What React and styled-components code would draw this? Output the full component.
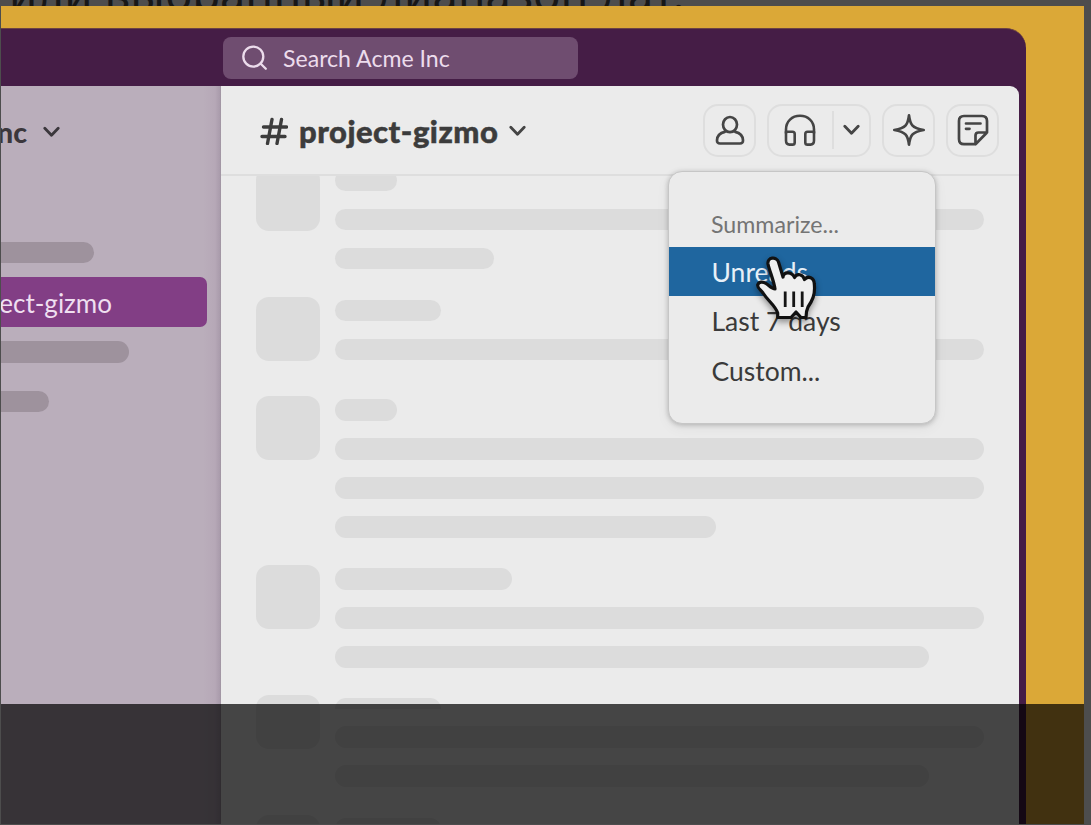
import React from "react"
import styled, { createGlobalStyle } from "styled-components"

const GlobalStyle = createGlobalStyle`
	* {
		box-sizing: border-box;
	}
	body {
		margin: 0;
		overflow: hidden;
		background: #4d4d4d;
		font-family: Lato, sans-serif;
	}
`
const Page = styled.div`
	display: flex;
	flex-direction: column;
	width: 1091px;
	height: 825px;
	overflow: hidden;
`
const Caption = styled.div`
	flex: 0 0 6px;
	display: flex;
	align-items: flex-end;
	overflow: hidden;
	padding-left: 9px;
	color: #171717;
	font: 45.7px/44px "Noto Sans", sans-serif;
	white-space: nowrap;
`
const CaptionText = styled.span`
	display: block;
	margin-bottom: -9px;
`
const Stage = styled.div`
	position: relative;
	width: 1083px;
	height: 818px;
	margin-left: 1px;
	padding-top: 22px;
	background: #dba837;
	overflow: hidden;
`
const Window = styled.div`
	display: flex;
	flex-direction: column;
	width: 1025px;
	height: 800px;
	background: #451d46;
	border-top: 1px solid #6b4345;
	border-top-right-radius: 20px;
`
const TopBar = styled.div`
	flex: 0 0 57px;
	padding: 8px 0 0 222px;
`
const SearchBox = styled.div`
	display: flex;
	align-items: center;
	width: 355px;
	height: 42px;
	padding: 0 0 1px 18px;
	gap: 14px;
	border-radius: 8px;
	background: #6f4d70;
	color: #ecdcec;
	font-size: 23.1px;
`
const Columns = styled.div`
	flex: 1;
	display: flex;
	min-height: 0;
	padding-right: 7px;
`
const Sidebar = styled.div`
	width: 220px;
	overflow: hidden;
	background: linear-gradient(90deg, #baaebb 0 202px, #b6a8b7 214px, #a99bab 219px, #9c929e);
`
const Workspace = styled.div`
	display: flex;
	align-items: center;
	gap: 16px;
	height: 93px;
	margin-left: -4px;
	padding-bottom: 1px;
	color: #3b373c;
	font-size: 28.5px;
	font-weight: 900;
`
const SideBar = styled.div`
	width: ${p => p.$width}px;
	height: 21.5px;
	margin-bottom: 28px;
	border-radius: 0 11px 11px 0;
	background: #9e929d;
`
const SideList = styled.div`
	padding-top: 62.5px;
`
const ActiveChannel = styled.div`
	display: flex;
	align-items: center;
	justify-content: flex-end;
	width: 206px;
	height: 50px;
	margin: -14px 0 14px;
	padding: 2px 95px 0 0;
	border-radius: 0 7px 7px 0;
	background: #823e85;
	color: #efdff0;
	font-size: 26px;
	white-space: nowrap;
`
const Main = styled.div`
	flex: 1;
	display: flex;
	flex-direction: column;
	min-width: 0;
	overflow: hidden;
	border-top-right-radius: 9px;
	background: #ebebeb;
`
const Header = styled.div`
	flex: 0 0 90px;
	display: flex;
	align-items: center;
	padding: 0 20px 0 39px;
	border-bottom: 2px solid #dedede;
`
const ChannelName = styled.div`
	display: flex;
	align-items: center;
	gap: 11px;
	margin-right: auto;
	padding-top: 2px;
	color: #3c3c3c;
	font-size: 31px;
	font-weight: 900;
	letter-spacing: 0.5px;
	-webkit-text-stroke: 0.5px #3c3c3c;
`
const Tools = styled.div`
	display: flex;
	gap: 11px;
`
const Tool = styled.div`
	display: flex;
	align-items: center;
	justify-content: center;
	width: ${p => p.$width || 53}px;
	height: 53px;
	border: 2px solid #dedede;
	border-radius: 15px;
`
const HuddleTool = styled(Tool)`
	justify-content: flex-start;
	padding-left: 15px;
`
const Divider = styled.div`
	width: 2px;
	height: 38px;
	margin: 0 9px 0 16px;
	background: #dedede;
`
const Feed = styled.div`
	flex: 1;
	overflow: hidden;
	padding-left: 35px;
`
const Post = styled.div`
	display: flex;
	gap: 15px;
	min-height: ${p => p.$short ? 120 : 99.5}px;
	&:first-child {
		margin-top: -9.5px;
	}
`
const Avatar = styled.div`
	width: 64px;
	height: ${p => p.$short ? 54 : 64}px;
	border-radius: 13px;
	background: #dcdcdc;
`
const Lines = styled.div`
	display: flex;
	flex-direction: column;
	gap: 17.5px;
	padding: 3px 0 27.6px;
`
const Line = styled.div`
	width: ${p => p.$width}px;
	height: 21.5px;
	border-radius: 11px;
	background: #dcdcdc;
	${p => p.$short && "&:first-child { height: 10.5px; border-radius: 11px 11px 0 0; }"}
`
const Menu = styled.div`
	position: absolute;
	top: 165px;
	left: 667px;
	width: 268px;
	height: 253px;
	padding-top: 31px;
	border: 1px solid #c6c6c6;
	border-radius: 14px;
	background: #ebebeb;
	box-shadow: 0 1px 5px rgba(0, 0, 0, 0.22), 0 4px 14px rgba(0, 0, 0, 0.05);
`
const MenuTitle = styled.div`
	height: 43.5px;
	padding-left: 42px;
	color: #747474;
	font-size: 23.2px;
	line-height: 42px;
`
const MenuItem = styled.div`
	height: 49.5px;
	padding-left: 42.5px;
	background: ${p => p.$active ? "#1f669f" : "none"};
	color: ${p => p.$active ? "#e7f0f8" : "#3a3a3a"};
	font-size: 26.5px;
	line-height: 51px;
`
const Cursor = styled.svg`
	position: absolute;
	left: 754px;
	top: 249px;
	filter: drop-shadow(0 3px 3px rgba(0, 0, 0, 0.4));
`
const Shade = styled.div`
	position: absolute;
	inset: 698px 0 0;
	background: rgba(0, 0, 0, 0.706);
`
const Stroke = styled.svg`
	flex-shrink: 0;
	fill: none;
	stroke: ${p => p.$color || "#454545"};
	stroke-width: ${p => p.$weight || 3};
	stroke-linecap: round;
	stroke-linejoin: round;
`

const FULL = 649
const posts = [
	{ lines: [62, FULL, 159] },
	{ lines: [106, FULL] },
	{ lines: [62, FULL, FULL, 381] },
	{ lines: [177, FULL, 594] },
	{ lines: [106, FULL, 594], short: true },
	{ lines: [106] }
]

function Chevron({ color }) {
	return (
		<Stroke width="17" height="16" viewBox="0 0 17 16" $color={color} $weight={2.8}>
			<path d="M1.8 4.2l6.7 7 6.7-7" />
		</Stroke>
	)
}

function SearchIcon() {
	return (
		<Stroke width="28" height="28" viewBox="0 0 28 28" $color="#ecdcec" $weight={2.3}>
			<circle cx="12.3" cy="12.6" r="10" />
			<path d="M19.5 19.5l5.3 5.3" />
		</Stroke>
	)
}

function HashIcon() {
	return (
		<Stroke width="28" height="28" viewBox="0 0 28 28" $color="#3c3c3c" $weight={3.4}>
			<path d="M12 2.5L7.5 26.5M21.5 2.5L17 26.5M3.5 10H26.5M2 19.5H25" />
		</Stroke>
	)
}

function PersonIcon() {
	return (
		<Stroke width="30" height="30" viewBox="0 0 30 30" $weight={2.7}>
			<ellipse cx="15" cy="9.6" rx="7" ry="7.6" />
			<path d="M9.8 16.9C5.2 18 2.2 20.9 2 25.2C1.9 27.4 3 28.5 5 28.5H25C27 28.5 28.1 27.4 28 25.2C27.8 20.9 24.8 18 20.2 16.9" />
		</Stroke>
	)
}

function HeadphonesIcon() {
	return (
		<Stroke width="32" height="32" viewBox="0 0 32 32" $weight={2.6}>
			<path d="M2 19V15.5C2 7.5 8 1.8 16 1.8S30 7.5 30 15.5V19" />
			<path d="M2 17.8V26.5Q2 30.6 5.5 30.6H8.5Q10.7 30.6 10.7 28.4V20Q10.7 17.8 8.5 17.8ZM30 17.8V26.5Q30 30.6 26.5 30.6H23.5Q21.3 30.6 21.3 28.4V20Q21.3 17.8 23.5 17.8Z" />
		</Stroke>
	)
}

function SparkIcon() {
	return (
		<Stroke width="34" height="34" viewBox="0 0 34 34" $weight={2.7}>
			<path d="M17 2.3C18.2 11.5 19.8 15 31.7 17C19.8 19 18.2 22.5 17 31.7C15.8 22.5 14.2 19 2.3 17C14.2 15 15.8 11.5 17 2.3Z" />
		</Stroke>
	)
}

function NoteIcon() {
	return (
		<Stroke width="32" height="32" viewBox="0 0 32 32" $weight={2.7}>
			<path d="M18.5 30.2H7Q2 30.2 2 25V7Q2 2 7 2H25Q30 2 30 7V18.5L18.5 30.2V21.5Q18.5 18.5 21.5 18.5H30" />
			<path d="M9 9.5H23.5M9 14.8H12.5" />
		</Stroke>
	)
}

export default function App() {
	return (
		<Page>
			<GlobalStyle />
			<Caption>
				<CaptionText>или выбранный диапазон дат.</CaptionText>
			</Caption>
			<Stage>
				<Window>
					<TopBar>
						<SearchBox>
							<SearchIcon />
							Search Acme Inc
						</SearchBox>
					</TopBar>
					<Columns>
						<Sidebar>
							<Workspace>
								nc
								<Chevron color="#3b373c" />
							</Workspace>
							<SideList>
								<SideBar $width={93} />
								<ActiveChannel>project-gizmo</ActiveChannel>
								<SideBar $width={128} />
								<SideBar $width={48} />
							</SideList>
						</Sidebar>
						<Main>
							<Header>
								<ChannelName>
									<HashIcon />
									project-gizmo
									<Chevron />
								</ChannelName>
								<Tools>
									<Tool><PersonIcon /></Tool>
									<HuddleTool $width={104}>
										<HeadphonesIcon />
										<Divider />
										<Chevron />
									</HuddleTool>
									<Tool><SparkIcon /></Tool>
									<Tool><NoteIcon /></Tool>
								</Tools>
							</Header>
							<Feed>
								{posts.map((post, i) => (
									<Post key={i} $short={post.short}>
										<Avatar $short={post.short} />
										<Lines>
											{post.lines.map((width, n) => (
												<Line key={n} $width={width} $short={post.short} />
											))}
										</Lines>
									</Post>
								))}
							</Feed>
						</Main>
					</Columns>
				</Window>
				<Menu>
					<MenuTitle>Summarize...</MenuTitle>
					<MenuItem $active>Unreads</MenuItem>
					<MenuItem>Last 7 days</MenuItem>
					<MenuItem>Custom...</MenuItem>
				</Menu>
				<Cursor width="64" height="70" viewBox="0 0 64 70">
					<path
						d="M22.7 62.5V58C20 50 13 46 8 38C6 35 2 33 2.8 30C3.5 26.5 8 26.5 11 28.5C14 30.5 17 34 20 34C19 26 14.5 16 13 9C12 2 21.5 1 23.5 7L28 22C28.5 16.5 37 16.5 39.5 22.5C42 18 48 19 49.5 24.5C53 20 59.3 23 59.3 29C60.5 40 57 46 53 52Q51 56 51 62.5H46L41 57L36 62.5Z"
						fill="#efefef"
						stroke="#111"
						strokeWidth="3.2"
						strokeLinejoin="round"
					/>
					<path d="M30.2 36.5V52M38.7 36.5V52M47.2 36.5V52" stroke="#151515" strokeWidth="2.8" />
				</Cursor>
				<Shade />
			</Stage>
		</Page>
	)
}
